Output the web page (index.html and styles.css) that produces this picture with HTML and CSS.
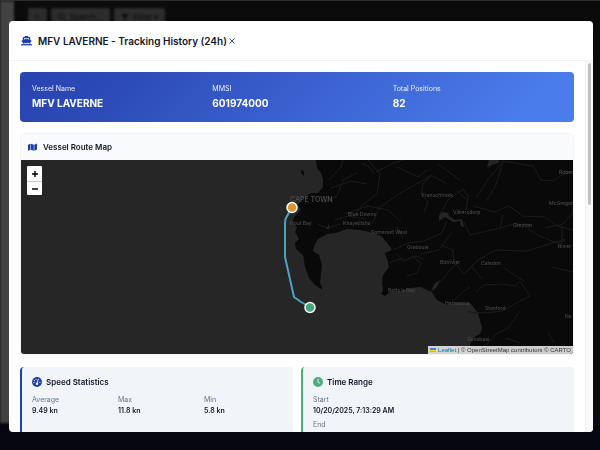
FILE: index.html
```html
<!DOCTYPE html>
<html lang="en">
<head>
<meta charset="utf-8">
<meta name="viewport" content="width=device-width, initial-scale=1">
<title>MFV LAVERNE - Tracking History</title>
<link rel="stylesheet" href="styles.css">
</head>
<body>
<div class="app" aria-hidden="true">
  <div class="app-side"></div>
  <div class="app-tools">
    <span class="tool">≡</span>
    <span class="tool tool-search">
      <svg viewBox="0 0 16 16" class="tool-icon"><circle cx="7" cy="7" r="5" fill="none" stroke="currentColor" stroke-width="2"/><path d="M11 11l4 4" stroke="currentColor" stroke-width="2"/></svg>Search...</span>
    <span class="tool">
      <svg viewBox="0 0 16 16" class="tool-icon"><path d="M1 2h14L10 9v6l-4-2V9z" fill="currentColor"/></svg>Filter ▾</span>
  </div>
  <div class="app-foot"></div>
</div>

<div class="overlay">
  <section class="modal" role="dialog" aria-labelledby="title">
    <header class="modal-head">
      <svg class="icon-ship" viewBox="0 0 22 20" fill="currentColor"><path d="M7.500 0h7v2H17q1.500 0 1.500 1.500V8l2 .8q1 .5.300 1.500L17.500 15q-1.500-.2-2.500-1-1.800-1.200-4-.1-2 .9-4 .1-1.300.9-2.500 1L1.200 10.300q-.7-1 .3-1.500l2-.8V3.500Q3.500 2 5 2h2.500zM6 4.500V7l5-1.500L16 7V4.500z"/><path d="M0 17q2 0 4-1.300 1-.6 2 0 2.500 1.600 5 0 1-.6 2 0 2.500 1.600 4.500 0 1-.6 1.800 0Q20.500 17 22 17v2q-2 0-3.700-1-3.300 2-6.300 0-3.500 2-6 0-3 1.500-6 1z"/></svg>
      <h1 id="title">MFV LAVERNE - Tracking History (24h)</h1>
      <button class="close" type="button" aria-label="Close"><svg viewBox="0 0 10 10"><path d="M2.500 2.500l5 5M7.500 2.500l-5 5" stroke="currentColor" stroke-width="1"/></svg></button>
    </header>

    <div class="modal-body">
      <dl class="banner">
        <div><dt>Vessel Name</dt><dd>MFV LAVERNE</dd></div>
        <div><dt>MMSI</dt><dd>601974000</dd></div>
        <div><dt>Total Positions</dt><dd>82</dd></div>
      </dl>

      <section class="map-card">
        <h2 class="map-title">
          <svg class="icon-map" viewBox="0 0 18 16" fill="currentColor"><path d="M0 3.500L5 1.500v12L0 15.500zM6 1.500l5.500 2v12L6 13.500zM12.500 3.500L18 1v12l-5.500 2.500z"/></svg>
          Vessel Route Map
        </h2>
        <div class="map">
          <svg class="map-art" viewBox="21 160 552 194" preserveAspectRatio="xMidYMid slice">
            <path class="land" d="M316 160L317 168L321 173L323 179L323 187L318 193L311 193L303 198L298 205L301 210L295 216L292 222L297 227L295 232L299 239L295 243L296 249L303 255L305 267L309 278L315 285L323 290L320 283L321 274L322 265L319 255L313 251L315 244L318 239L327 234L336 233L347 229L360 230L370 232L381 236L388 244L392 250L385 253L387 259L389 267L383 275L382 283L383 290L381 294L385 296L390 292L400 291L410 288L420 287L432 292L437 300L447 305L456 303L470 303L478 313L482 328L480 334L473 338L470 345L475 354H573V160Z"/>
            <path class="land" d="M301 170l3 1v5l-3-3z"/>
            <path class="lake" d="M439 215l4-3 5 1 1 3 6 4 7-1 2 8-3-1-1-5-7 1-8-5-6 4zM487 167l2-7h8l3 2-8 3zM431 291l4-8 5-3-4 8zM326 229l3-5v5zM435 183l8-6z"/>
            <g class="roads">
              <path d="M329 180l12-13 2-7M331 188l20-7 16 3M323 203l14-7 6-16 14-7M353 218l8-12 16-12 3-20-12-14M345 214l23-8 20 4 13 12M372 224l8-17 22-15 22-12 7-5 16 9M374 174l-5-7-7-4M376 172l17-9 11-3M397 167l21 10 10-8M438 164l11 8 11 8M431 176l-8 8-2 10 7 8-4 10M439 216l9-16 15-11 5 7-2 14M464 222l6 13 13-3 17-4 14-4 18 1M466 199l-9-8M476 198l13-20 14-16M487 200l9-15 7-24 30 5 8 14 13 1 6-5 13-5M474 206l20 6 15-6 14 10 22 1 12 9 16 4M500 228l3-13M528 229l11 7 18 7 9-3M562 226v18"/>
              <path d="M335 220l13-4 18 3M318 224l9 4 14-4M393 250l15-7 16-2 18-8 5-12M403 238l-6-11M397 253l6 8 13-5 7 3M407 276l10-3 4-10-9-7M389 263l14-5M420 254l19-4 13-18M433 291l12-15 11-12 8 10 13-13 18-11 32 1 38-12M454 264l-1-14-12-5M471 266l11 13M452 302l12-11 6-4M476 292l8-7 18-1 13 2 5-5 10 15-8 4-20 11-16 2-18-1M520 311l-12 17-13 7-17 19M506 338l14 5M552 267l21 5M545 228l18-4 10-12M548 333l6 10M524 281l-20-13M495 161l-6 7"/>
            </g>
            <g class="places">
              <text class="city" x="290" y="202">CAPE TOWN</text>
              <text x="290" y="225">Hout Bay</text><text x="348" y="216">Blue Downs</text><text x="343" y="225">Khayelitsha</text>
              <text x="371" y="234">Somerset West</text><text x="407" y="249">Grabouw</text><text x="422" y="197">Franschhoek</text>
              <text x="453" y="214">Villiersdorp</text><text x="513" y="227">Greyton</text><text x="549" y="205">McGregor</text>
              <text x="559" y="174">Rober</text><text x="558" y="248">Rivier</text><text x="440" y="264">Botrivier</text>
              <text x="481" y="265">Caledon</text><text x="388" y="292">Betty's Bay</text><text x="445" y="305">Hermanus</text>
              <text x="485" y="310">Stanford</text><text x="565" y="318">Na</text><text x="467" y="341">Gansbaai</text>
            </g>
            <path class="route" d="M292 207L286 218Q285 220 285 224V257L294 297L301 302L310 307"/>
            <circle class="pin pin-end" cx="292" cy="207.500" r="5"/>
            <circle class="pin pin-start" cx="310" cy="307.500" r="5"/>
          </svg>
          <div class="zoom">
            <button type="button" aria-label="Zoom in"><svg viewBox="0 0 10 10"><path d="M2 5h6M5 2v6" stroke="currentColor" stroke-width="1.400"/></svg></button>
            <button type="button" aria-label="Zoom out"><svg viewBox="0 0 10 10"><path d="M2 5h6" stroke="currentColor" stroke-width="1.400"/></svg></button>
          </div>
          <p class="credit"><svg class="flag" viewBox="0 0 12 8"><path fill="#4c7be1" d="M0 0h12v4H0z"/><path fill="#ffd500" d="M0 4h12v2H0z"/><path fill="#e0bc00" d="M0 6h12v2H0z"/></svg> <a href="#">Leaflet</a> | © OpenStreetMap contributors © CARTO</p>
        </div>
      </section>

      <div class="cards">
        <section class="card card-speed">
          <h2><svg class="icon-round" viewBox="0 0 20 20"><circle cx="10" cy="10" r="10" fill="currentColor"/><path d="M12.500 4.500L10.500 12" stroke="#f1f5f9" stroke-width="1.800" stroke-linecap="round"/><circle cx="10" cy="13.500" r="2.500" fill="#f1f5f9"/><g fill="#f1f5f9"><circle cx="8" cy="4.500" r="1.200"/><circle cx="4.800" cy="7.200" r="1.200"/><circle cx="3.800" cy="11" r="1.200"/><circle cx="15.800" cy="10.500" r="1.200"/></g></svg>Speed Statistics</h2>
          <dl class="stats">
            <div><dt>Average</dt><dd>9.49 kn</dd></div>
            <div><dt>Max</dt><dd>11.8 kn</dd></div>
            <div><dt>Min</dt><dd>5.8 kn</dd></div>
          </dl>
        </section>
        <section class="card card-time">
          <h2><svg class="icon-round" viewBox="0 0 20 20"><circle cx="10" cy="10" r="10" fill="currentColor"/><path d="M10 4.500V10l3.500 2.500" fill="none" stroke="#f1f5f9" stroke-width="1.800" stroke-linecap="round"/></svg>Time Range</h2>
          <dl class="times">
            <div><dt>Start</dt><dd>10/20/2025, 7:13:29 AM</dd></div>
            <div><dt>End</dt></div>
          </dl>
        </section>
      </div>
    </div>
    <div class="track"><div class="thumb"></div></div>
  </section>
</div>
</body>
</html>
```
FILE: styles.css
```css
* { box-sizing: border-box; }

body {
  margin: 0;
  height: 100vh;
  overflow: hidden;
  background: #0b0b0b;
  color: #0f172a;
  font-family: Inter, "Liberation Sans", sans-serif;
  font-size: 7px;
}

h1, h2, dl, dd, p { margin: 0; }
svg { display: block; flex: none; }
button { border: 0; padding: 0; background: none; }

.app {
  display: grid;
  grid-template: 1fr 27px / 14px 1fr;
  height: 100%;
  border-top: 1px solid #2b2d2c;
}
.app-side { background: #424243; filter: blur(1px); }
.app-tools {
  display: flex;
  align-items: flex-start;
  gap: 4px;
  padding: 7px 14px;
  filter: blur(1px);
}
.tool {
  display: flex;
  align-items: center;
  gap: 4px;
  height: 18px;
  padding: 0 7px;
  border-radius: 2px;
  background: #2c2c2c;
  color: #0a0a0a;
  font-size: 8px;
}
.tool-icon { width: 8px; height: 8px; }
.app-foot { grid-column: 1 / -1; background: #07070f; }

.overlay {
  position: absolute;
  inset: 0;
  padding: 21px 7px 18px 9px;
}
.modal {
  position: relative;
  display: flex;
  flex-direction: column;
  height: 100%;
  overflow: hidden;
  border-radius: 4px;
  background: #fff;
}
.modal-head {
  display: flex;
  align-items: center;
  flex: none;
  height: 40px;
  padding: 0 12px;
  border-bottom: 1px solid #f1f2f4;
}
.icon-ship { width: 11px; height: 10px; margin-right: 6px; color: #1e40af; }
.modal-head h1 { font-size: 10px; font-weight: 600; }
.close { color: #475569; }
.close svg { width: 10px; height: 10px; }

.modal-body {
  flex: 1;
  min-height: 0;
  padding: 11px 19px 11px 11px;
  overflow-y: auto;
  scrollbar-width: none;
}
.track {
  position: absolute;
  top: 40px;
  right: 0;
  bottom: 0;
  width: 8px;
  padding: 2px;
  border-left: 1px solid #eee;
  background: #fafafa;
}
.thumb { height: 142px; border-radius: 3px; background: #c1c1c1; }

.banner {
  display: grid;
  grid-template-columns: repeat(3, 1fr);
  gap: 11px;
  padding: 12px;
  border-radius: 4px;
  background: linear-gradient(135deg, #2743b0, #2d4cb8 20%, #4b7cec 90%, #4b7cec);
  color: #fff;
}
.banner dt { font-size: 7px; line-height: 10px; opacity: .9; }
.banner dd { margin-top: 2px; font-size: 10px; font-weight: 700; line-height: 14px; }

.map-card {
  margin-top: 11px;
  overflow: hidden;
  border: 1px solid #f1f5f9;
  border-radius: 4px;
}
.map-title {
  display: flex;
  align-items: center;
  gap: 6px;
  height: 26px;
  padding: 0 7px;
  background: #f8fafc;
  font-size: 8px;
  font-weight: 600;
}
.icon-map { width: 9px; height: 8px; color: #1e40af; }

.map { position: relative; background: #262626; }
.map-art { width: 100%; height: 194px; }
.land { fill: #090909; }
.lake { fill: #262626; }
.roads { fill: none; stroke: #1c1c1c; stroke-width: 1; }
.places { fill: #484848; font-size: 5px; font-weight: 500; }
.city { fill: #505050; font-size: 7px; }
.route { fill: none; stroke: #4ba3c3; stroke-width: 2; stroke-linejoin: round; }
.pin { stroke: #fff; stroke-width: 1.500; }
.pin-end { fill: #db9633; }
.pin-start { fill: #42a873; }

.zoom {
  position: absolute;
  top: 6px;
  left: 6px;
  border-radius: 1px;
  overflow: hidden;
  background: #fff;
}
.zoom button {
  display: grid;
  place-items: center;
  width: 15px;
  height: 15px;
  color: #000;
}
.zoom button + button { height: 14px; border-top: 1px solid #ccc; }
.zoom svg { width: 10px; height: 10px; }

.credit {
  position: absolute;
  right: 0;
  bottom: 0;
  padding: 0 2px;
  background: rgba(255, 255, 255, .8);
  color: #333;
  font: 6px/8px "Liberation Sans", sans-serif;
  white-space: nowrap;
}
.credit a { color: #0078a8; text-decoration: none; }
.flag { display: inline-block; width: 6px; height: 4px; }

.cards {
  display: grid;
  grid-template-columns: 1fr 1fr;
  gap: 8px;
  margin-top: 12px;
}
.card {
  padding: 9px 11px 10px 10px;
  border-left: 2px solid;
  border-radius: 4px;
  background: #f1f5f9;
}
.card-speed { border-color: #1e40af; }
.card-time { border-color: #4caf7a; }
.card h2 {
  display: flex;
  align-items: center;
  gap: 4px;
  height: 12px;
  color: #0f172a;
  font-size: 8px;
  font-weight: 600;
}
.icon-round { width: 10px; height: 10px; }
.card-speed .icon-round { color: #1e40af; }
.card-time .icon-round { color: #4caf7a; }
.stats, .times { display: grid; margin-top: 6px; line-height: 11px; }
.stats { grid-template-columns: repeat(3, 1fr); gap: 8px; }
.times { gap: 3px; }
.card dt { color: #64748b; font-size: 7px; }
.card dd { font-size: 7px; font-weight: 600; }
```
